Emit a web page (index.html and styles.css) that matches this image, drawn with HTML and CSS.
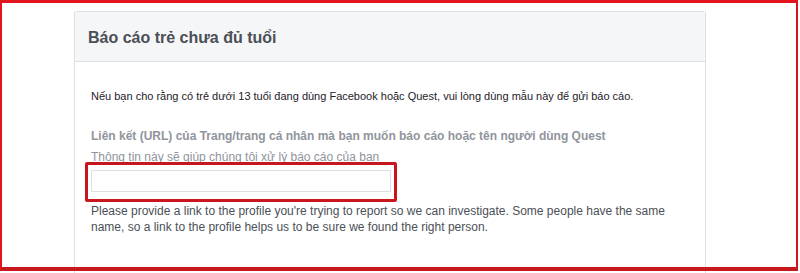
FILE: index.html
```html
<!DOCTYPE html>
<html lang="vi">
<head>
<meta charset="utf-8">
<title>Báo cáo trẻ chưa đủ tuổi</title>
<link rel="stylesheet" href="styles.css">
</head>
<body>
<div class="page">
  <div class="card">
    <div class="card-header">
      <h1 class="title">Báo cáo trẻ chưa đủ tuổi</h1>
    </div>
    <div class="card-body">
      <p class="intro">Nếu bạn cho rằng có trẻ dưới 13 tuổi đang dùng Facebook hoặc Quest, vui lòng dùng mẫu này để gửi báo cáo.</p>
      <label class="label" for="url">Liên kết (URL) của Trang/trang cá nhân mà bạn muốn báo cáo hoặc tên người dùng Quest</label>
      <div class="hint">Thông tin này sẽ giúp chúng tôi xử lý báo cáo của bạn</div>
      <div class="field">
        <input class="input" id="url" type="text">
        <div class="highlight"></div>
      </div>
      <p class="help">Please provide a link to the profile you're trying to report so we can investigate. Some people have the same name, so a link to the profile helps us to be sure we found the right person.</p>
    </div>
  </div>
  <div class="frame"></div>
</div>
</body>
</html>
```
FILE: styles.css
```css
html, body {
  margin: 0;
  padding: 0;
  background: #ffffff;
}
body {
  font-family: "Liberation Sans", Arial, Helvetica, sans-serif;
  width: 800px;
  height: 273px;
  overflow: hidden;
}
.page {
  position: relative;
  width: 800px;
  height: 273px;
  padding-top: 11px;
  padding-left: 74px;
  box-sizing: border-box;
  overflow: hidden;
}
.card {
  width: 632px;
  height: 262px;
  box-sizing: border-box;
  border: 1px solid #dddfe2;
  border-bottom: none;
  border-radius: 3px 3px 0 0;
  background: #ffffff;
}
.card-header {
  height: 49px;
  background: #f5f6f7;
  border-bottom: 1px solid #dddfe2;
  padding-left: 13px;
  display: flex;
  align-items: center;
}
.title {
  margin: 0;
  font-size: 16px;
  font-weight: bold;
  color: #4b4f56;
  line-height: 20px;
  padding-top: 2px;
}
.card-body {
  padding: 26px 16px 0 16px;
}
.intro {
  margin: 0;
  font-size: 11px;
  line-height: 16px;
  color: #1d2129;
}
.label {
  display: block;
  margin-top: 24px;
  font-size: 12px;
  line-height: 16px;
  font-weight: bold;
  color: #90949c;
}
.hint {
  margin-top: 5px;
  font-size: 12px;
  line-height: 16px;
  color: #90949c;
}
.field {
  position: relative;
  margin-top: 5px;
  width: 300px;
  height: 22px;
}
.input {
  display: block;
  width: 300px;
  height: 22px;
  box-sizing: border-box;
  border: 1px solid #dddfe2;
  margin: 0;
  padding: 0 4px;
  background: #ffffff;
}
.highlight {
  position: absolute;
  left: -6px;
  top: -8px;
  width: 312px;
  height: 40px;
  box-sizing: border-box;
  border: 3px solid #c8161d;
  border-radius: 2px;
}
.help {
  margin: 11px 0 0 0;
  font-size: 12px;
  line-height: 16px;
  color: #4b4f56;
}
.frame {
  position: absolute;
  left: 0;
  top: 0;
  width: 798px;
  height: 271px;
  box-sizing: border-box;
  border-style: solid;
  border-width: 3px 2px 4px 2px;
  border-color: #e3141b #d0161c #c8181e #e3141b;
  pointer-events: none;
}
```
